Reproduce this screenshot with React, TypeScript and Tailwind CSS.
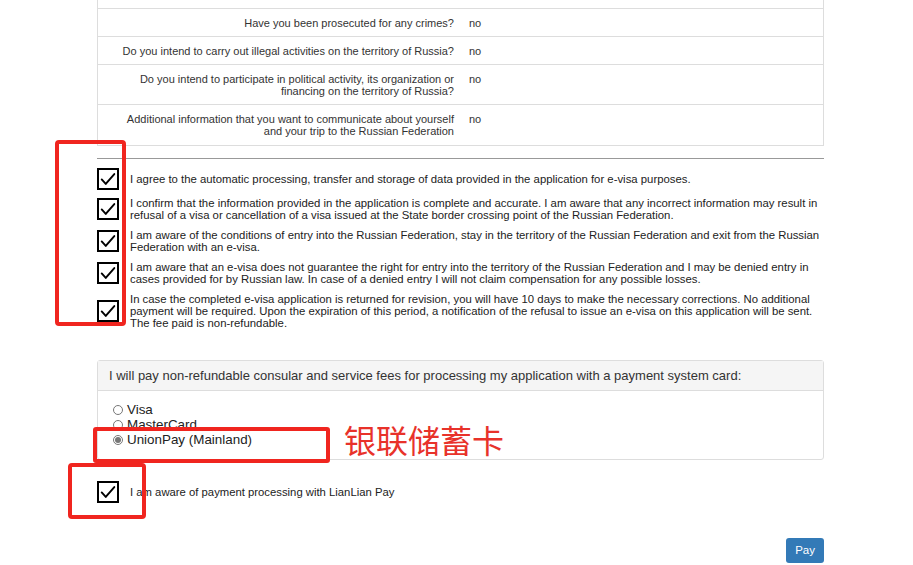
import React from "react";

const rows: { q: React.ReactNode; h: string }[] = [
  { q: "Have you been prosecuted for any crimes?", h: "h-[28px]" },
  { q: "Do you intend to carry out illegal activities on the territory of Russia?", h: "h-[28px]" },
  {
    q: (
      <>
        Do you intend to participate in political activity, its organization or
        <br />
        financing on the territory of Russia?
      </>
    ),
    h: "h-[40px]",
  },
  {
    q: (
      <>
        Additional information that you want to communicate about yourself
        <br />
        and your trip to the Russian Federation
      </>
    ),
    h: "h-[40px]",
  },
];

const agreements: { text: React.ReactNode; mt: string }[] = [
  { text: "I agree to the automatic processing, transfer and storage of data provided in the application for e-visa purposes.", mt: "mt-[9px]" },
  {
    text: "I confirm that the information provided in the application is complete and accurate. I am aware that any incorrect information may result in refusal of a visa or cancellation of a visa issued at the State border crossing point of the Russian Federation.",
    mt: "mt-[7px]",
  },
  {
    text: "I am aware of the conditions of entry into the Russian Federation, stay in the territory of the Russian Federation and exit from the Russian Federation with an e-visa.",
    mt: "mt-[8px]",
  },
  {
    text: "I am aware that an e-visa does not guarantee the right for entry into the territory of the Russian Federation and I may be denied entry in cases provided for by Russian law. In case of a denied entry I will not claim compensation for any possible losses.",
    mt: "mt-[8px]",
  },
  {
    text: "In case the completed e-visa application is returned for revision, you will have 10 days to make the necessary corrections. No additional payment will be required. Upon the expiration of this period, a notification of the refusal to issue an e-visa on this application will be sent. The fee paid is non-refundable.",
    mt: "mt-[8px]",
  },
];

function CheckBox() {
  return (
    <div className="flex h-[22px] w-[22px] shrink-0 items-center justify-center border-2 border-black bg-white">
      <svg viewBox="0 0 20 20" className="h-[18px] w-[18px]" fill="none" stroke="black" strokeWidth={2.1} strokeLinecap="round" strokeLinejoin="round">
        <path d="M3 10.5 L7.5 15.5 L17 4.5" />
      </svg>
    </div>
  );
}

function Radio({ checked }: { checked?: boolean }) {
  return (
    <span className="mr-[4px] inline-flex h-[10px] w-[10px] items-center justify-center rounded-full border border-[#777] bg-white">
      {checked && <span className="h-[6px] w-[6px] rounded-full bg-[#777]" />}
    </span>
  );
}

export default function App() {
  return (
    <div className="relative h-[565px] w-[913px] overflow-hidden bg-white font-['Liberation_Sans',Arial,sans-serif] text-[#333]">
      <div className="ml-[97px] w-[727px]">
        {/* questionnaire table, scrolled */}
        <div className="border-x border-b border-[#ddd] text-[11px] leading-[12px]">
          <div className="h-[9px] border-b border-[#ddd]" />
          {rows.map((r, i) => (
            <div key={i} className={`flex ${r.h} ${i < rows.length - 1 ? "border-b border-[#ddd]" : ""}`}>
              <div className="w-[371px] pt-[8px] pr-[15px] text-right">{r.q}</div>
              <div className="pt-[8px]">no</div>
            </div>
          ))}
        </div>

        <div className="mt-[12px] border-t border-[#999]" />

        {/* agreements */}
        <div className="text-[11.35px] leading-[12px] text-[#222]">
          {agreements.map((a, i) => (
            <div key={i} className={`flex items-center gap-[11px] ${a.mt}`}>
              <CheckBox />
              <div className="pr-[2px]">{a.text}</div>
            </div>
          ))}
        </div>

        {/* payment panel */}
        <div className="mt-[31px] rounded-[3px] border border-[#ddd]">
          <div className="flex h-[30px] items-center border-b border-[#ddd] bg-[#f5f5f5] px-[11px] text-[13px] text-[#333]">
            I will pay non-refundable consular and service fees for processing my application with a payment system card:
          </div>
          <div className="pt-[11px] pb-[12px] pl-[15px] text-[13.4px] leading-[15px] text-[#222]">
            <div className="flex items-center"><Radio />Visa</div>
            <div className="flex items-center"><Radio />MasterCard</div>
            <div className="flex items-center"><Radio checked />UnionPay (Mainland)</div>
          </div>
        </div>

        <div className="mt-[21px] flex items-center gap-[11px] text-[11.3px] text-[#222]">
          <CheckBox />
          <span>I am aware of payment processing with LianLian Pay</span>
        </div>

        <div className="mt-[35px] flex justify-end">
          <button className="h-[25px] rounded-[3px] bg-[#337ab7] px-[9px] text-[11.5px] text-white">Pay</button>
        </div>
      </div>

      {/* annotation overlays */}
      <div className="absolute left-[55px] top-[140px] h-[186px] w-[71px] rounded-[4px] border-[4px] border-[#f0251f]" />
      <div className="absolute left-[93px] top-[427px] h-[36px] w-[237px] rounded-[3px] border-[4px] border-[#f0251f]" />
      <div className="absolute left-[68px] top-[463px] h-[56px] w-[78px] rounded-[4px] border-[4px] border-[#f0251f]" />
      <div className="absolute left-[344px] top-[419px] font-['Noto_Sans_CJK_SC',sans-serif] text-[32px] leading-[40px] text-[#e8322a]">
        银联储蓄卡
      </div>
    </div>
  );
}
